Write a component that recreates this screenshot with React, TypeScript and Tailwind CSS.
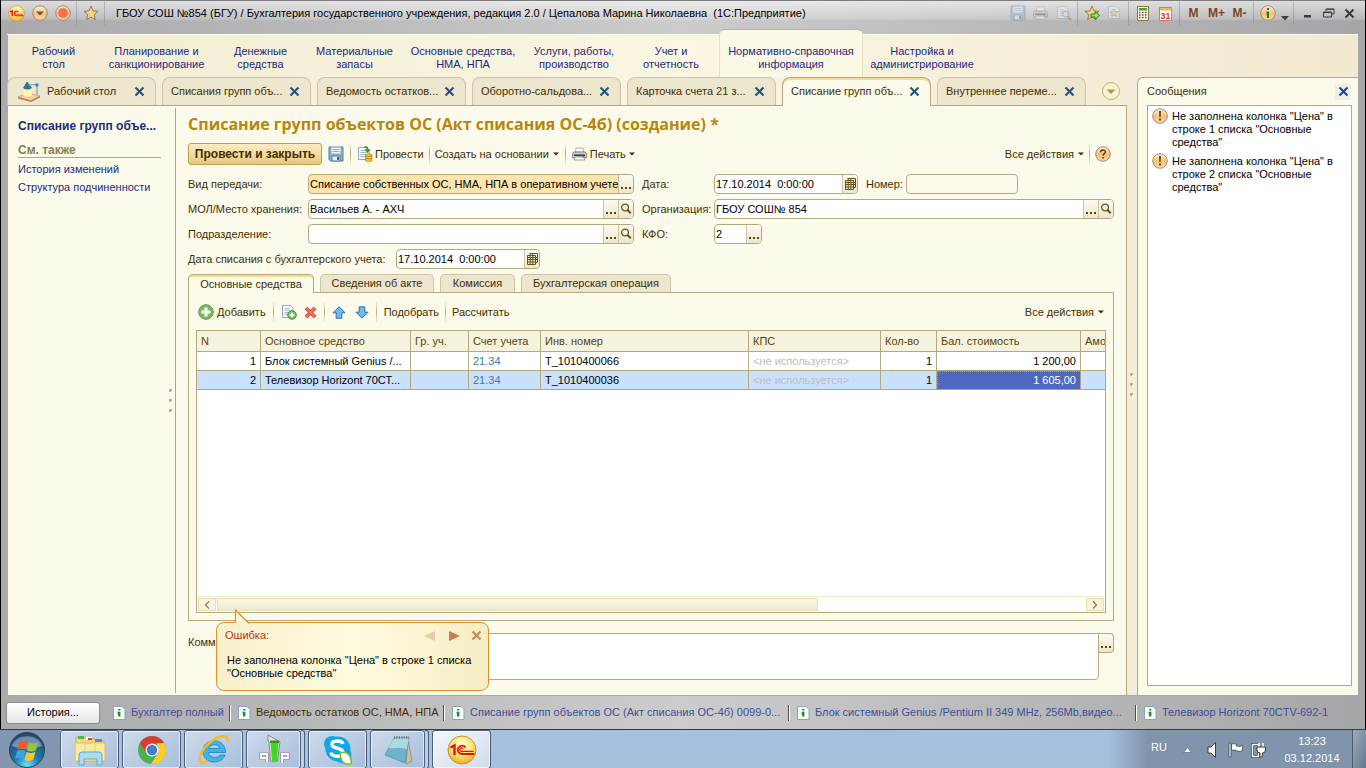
import type { ReactNode } from 'react';
import { clsx } from 'clsx';

const sections = [
  { lines: ['Рабочий', 'стол'], width: 'w-[93px]' },
  { lines: ['Планирование и', 'санкционирование'], width: 'w-[113px]' },
  { lines: ['Денежные', 'средства'], width: 'w-[95px]' },
  { lines: ['Материальные', 'запасы'], width: 'w-[93px]' },
  { lines: ['Основные средства,', 'НМА, НПА'], width: 'w-[124px]' },
  { lines: ['Услуги, работы,', 'производство'], width: 'w-[98px]' },
  { lines: ['Учет и', 'отчетность'], width: 'w-[96px]' },
  { lines: ['Нормативно-справочная', 'информация'], width: 'w-[144px]', active: true },
  { lines: ['Настройка и', 'администрирование'], width: 'w-[118px]' },
];

const tabs = [
  { title: 'Рабочий стол', desktop: true },
  { title: 'Списания групп объ...' },
  { title: 'Ведомость остатков...' },
  { title: 'Оборотно-сальдова...' },
  { title: 'Карточка счета 21 з...' },
  { title: 'Списание групп объ...', active: true },
  { title: 'Внутреннее переме...' },
];

const rows = [
  { n: 1, name: 'Блок системный Genius /...', account: '21.34', inv: 'Т_1010400066', qty: 1, cost: '1 200,00' },
  { n: 2, name: 'Телевизор Horizont 70СТ...', account: '21.34', inv: 'Т_1010400036', qty: 1, cost: '1 605,00', selected: true },
];

const history = [
  { title: 'Бухгалтер полный', width: 'w-[116px]' },
  { title: 'Ведомость остатков ОС, НМА, НПА', width: 'w-[214px]', current: true },
  { title: 'Списание групп объектов ОС (Акт списания ОС-4б) 0099-0...', width: 'w-[345px]' },
  { title: 'Блок системный Genius /Pentium II 349 MHz, 256Mb,видео...', width: 'w-[347px]' },
  { title: 'Телевизор Horizont 70CTV-692-1', width: 'w-[200px]' },
];

/* ---------- icons ---------- */

function CloseIcon({ color = '#1f5378' }: { color?: string }) {
  return (
    <svg width="11" height="11" viewBox="0 0 11 11" fill="none">
      <path d="M1.500 1.500l8 8M9.500 1.500l-8 8" stroke={color} strokeWidth="2.100" />
    </svg>
  );
}

function OneCIcon({ size }: { size: number }) {
  return (
    <svg width={size} height={size} viewBox="0 0 30 30" fill="none">
      <defs>
        <radialGradient id="gold" cx="50%" cy="30%" r="75%">
          <stop offset="0" stopColor="#fffbd0" />
          <stop offset=".55" stopColor="#fbe16a" />
          <stop offset="1" stopColor="#e9a51c" />
        </radialGradient>
      </defs>
      <circle cx="15" cy="15" r="14" fill="url(#gold)" stroke="#c98d2c" />
      <path d="M3.500 12.500l4-2v9.500" stroke="#e0140c" strokeWidth="2.400" />
      <path d="M18.500 12.500a4.200 4.200 0 1 0-4 6.500h13" stroke="#e0140c" strokeWidth="1.800" />
      <path d="M16.300 13.800a1.800 1.800 0 1 0-1.800 2.600h12" stroke="#e0140c" strokeWidth="1.200" />
    </svg>
  );
}

function OrangeBall({ children }: { children?: ReactNode }) {
  return (
    <svg width="16" height="16" viewBox="0 0 16 16" fill="none">
      <defs>
        <linearGradient id="ball" x1="0" y1="0" x2="0" y2="1">
          <stop offset="0" stopColor="#fdeed9" />
          <stop offset=".55" stopColor="#f8bf76" />
          <stop offset="1" stopColor="#fbdcae" />
        </linearGradient>
      </defs>
      <circle cx="8" cy="8" r="7.300" fill="url(#ball)" stroke="#a58c78" />
      {children}
    </svg>
  );
}

function StarIcon({ arrow }: { arrow?: boolean }) {
  return (
    <svg width="16" height="16" viewBox="0 0 16 16">
      <path d="M8 1l2 4.900 5 .4-3.800 3.300 1.200 5L8 12l-4.400 2.600 1.200-5L1 6.300l5-.4z" fill="#fbd27e" stroke="#9a7a50" />
      {arrow && <path d="M7 9h4V6.500l4.500 4-4.500 4V12H7z" fill="#9ade5e" stroke="#2f7d1c" />}
    </svg>
  );
}

function FloppyIcon() {
  return (
    <svg width="16" height="16" viewBox="0 0 16 16">
      <path d="M1 1h14v14H2.500L1 13.500z" fill="#8fb0cb" stroke="#557e9e" />
      <path d="M3.500 1.500h9v6h-9z" fill="#eef5fa" />
      <path d="M4.500 3.500h7M4.500 5.500h7" stroke="#8fa9bd" />
      <path d="M4 10h8v5H4z" fill="#e9eef2" stroke="#557e9e" />
      <path d="M9 11h2v3H9z" fill="#41637f" />
    </svg>
  );
}

function PrinterIcon() {
  return (
    <svg width="15" height="14" viewBox="0 0 15 14">
      <path d="M4 1h7l.5 4h-8z" fill="#fff" stroke="#9a9a9a" strokeWidth=".8" />
      <path d="M1.500 5h12l1 2v4H.5V7z" fill="#c9c9c9" stroke="#7c7c7c" strokeWidth=".8" />
      <path d="M2 7.500h11v1.500H2z" fill="#3b3b3b" />
      <path d="M3 10h9l.8 3H2.200z" fill="#fff" stroke="#8c8c8c" strokeWidth=".8" />
      <path d="M10.500 10h2" stroke="#d24b2c" strokeWidth="1.500" />
    </svg>
  );
}

function PageIcon({ children }: { children?: ReactNode }) {
  return (
    <svg width="16" height="16" viewBox="0 0 16 16">
      <path d="M1.500 1.500h8l2.500 2.500v9.500H1.500z" fill="#f7fafc" stroke="#94a9b8" />
      <path d="M3.500 4.500h5M3.500 6.500h6M3.500 8.500h6M3.500 10.500h5" stroke="#a7bac8" />
      {children}
    </svg>
  );
}

function CoinsPostIcon() {
  return (
    <PageIcon>
      <path d="M7.500 0c3 0 4 1 4 3.500h2.500L10.500 7 7 3.500h2.300C9.300 2 8.500 1.500 7.500 1.500z" fill="#3d9b35" />
      <path d="M8.500 9c0-1.600 6.500-1.600 6.500 0v5.500c0 1.500-6.500 1.500-6.500 0z" fill="#f3c02f" stroke="#b98410" strokeWidth=".7" />
      <path d="M8.500 9.500c1 1.300 5.500 1.300 6.500 0M8.500 12c1 1.300 5.500 1.300 6.500 0" fill="none" stroke="#b98410" strokeWidth=".8" />
    </PageIcon>
  );
}

function SearchIcon() {
  return (
    <svg width="12" height="12" viewBox="0 0 12 12" fill="none">
      <circle cx="5" cy="4.500" r="3.400" stroke="#6a5312" strokeWidth="1.300" />
      <path d="M7.500 7l3.200 3.300" stroke="#6a5312" strokeWidth="2" />
    </svg>
  );
}

function CalendarGridIcon() {
  return (
    <svg width="11" height="12" viewBox="0 0 11 12" fill="none">
      <path d="M2.500.5h8v9h-2M.5 2.500h8v9h-8zM.5 4.500h10M.5 6.500h10M.5 9h8M3.200.5v11M5.800.5v11" stroke="#6a5312" />
    </svg>
  );
}

function DropArrow() {
  return (
    <svg width="6" height="4" viewBox="0 0 6 4" className="shrink-0">
      <path d="M0 .5h6l-3 3z" fill="#3f2f00" />
    </svg>
  );
}

function InfoPageIcon() {
  return (
    <svg width="13" height="14" viewBox="0 0 13 14" className="shrink-0">
      <path d="M.5.5h8.500l3 3v10H.5z" fill="#f6fbff" stroke="#89a4b4" />
      <path d="M5.200 3h2.200v1.600H5.200zM4.500 5.800h2.900v4.700h-2.200z" fill="#2b8a18" />
    </svg>
  );
}

function LampIcon() {
  return (
    <svg width="25" height="22" viewBox="0 0 25 22" fill="none">
      <path d="M1 16l10-4 12 3-9 5z" fill="#f0cfa2" stroke="#b58a5e" strokeWidth=".6" />
      <path d="M1 16l13 3.500 9-4.500v1.500l-9 4.500-13-3.500z" fill="#b97c4b" />
      <path d="M9 7l-3 7c3 2.500 8 2 9 0l-1-7z" fill="#fff6ae" />
      <path d="M10 1l4.500 6c-2 1.600-6 1.400-8 0z" fill="#2a7ea6" stroke="#14506f" strokeWidth=".6" />
      <path d="M12 4l8-.5V14" stroke="#7fa4b5" strokeWidth="1.200" />
      <circle cx="20" cy="4" r="1.700" fill="#2f8bb4" />
    </svg>
  );
}

function MoveArrow({ down }: { down?: boolean }) {
  return (
    <svg width="14" height="13" viewBox="0 0 14 13" className={down ? 'rotate-180' : undefined}>
      <path d="M7 .8l6 6H9.800v5.400H4.200V6.800H1z" fill="#6fb9ee" stroke="#336f9f" />
    </svg>
  );
}

/* ---------- small parts ---------- */

const pickClass =
  'flex w-[15px] shrink-0 items-center justify-center self-stretch border-l border-[#cdc5a2] bg-linear-to-b from-[#fdfbf0] to-[#ece6cd] text-[#5a4408]';

function DotsIcon() {
  return (
    <svg width="11" height="12" viewBox="0 0 11 12">
      <path d="M0 9h2v2H0zM4 9h2v2H4zM8 9h2v2H8z" fill="#5a4408" />
    </svg>
  );
}

function EllipsisButton() {
  return (
    <button type="button" aria-label="Выбрать" className={pickClass}>
      <DotsIcon />
    </button>
  );
}

function SearchButton() {
  return (
    <button type="button" aria-label="Открыть" className={pickClass}>
      <SearchIcon />
    </button>
  );
}

function DateButton() {
  return (
    <button type="button" aria-label="Календарь" className={pickClass}>
      <CalendarGridIcon />
    </button>
  );
}

interface FieldProps {
  id: string;
  value?: string;
  width: string;
  tone?: string;
  readOnly?: boolean;
  children?: ReactNode;
}

function Field({ id, value = '', width, tone = 'bg-white', readOnly, children }: FieldProps) {
  return (
    <div className={clsx('flex h-5 items-center overflow-hidden rounded border border-[#b3a97f]', width, tone)}>
      <input id={id} defaultValue={value} readOnly={readOnly} className="min-w-0 flex-1 pl-px whitespace-pre text-black outline-none" />
      {children}
    </div>
  );
}

function Divider() {
  return <span className="h-5 w-px shrink-0 bg-linear-to-b from-[#f5efd8] via-[#b3a97f] to-[#f5efd8]" />;
}

function BarDivider() {
  return <span className="mx-[2px] h-6 w-px shrink-0 bg-linear-to-b from-[#b9b9bb] to-[#98989b]" />;
}

function BarButton({ label, faded, children }: { label: string; faded?: boolean; children: ReactNode }) {
  return (
    <button
      type="button"
      aria-label={label}
      className={clsx('flex h-6 w-[23px] shrink-0 items-center justify-center', faded && 'opacity-40')}
    >
      {children}
    </button>
  );
}

function TitleBar() {
  return (
    <header className="flex h-[34px] items-start border-t border-[#7d7d80] bg-linear-to-b from-white/60 from-0% via-white/20 via-55% to-transparent to-60% pl-1 pr-[5px]">
      <div className="flex h-6 items-center">
        <BarButton label="Главное меню"><OneCIcon size={17} /></BarButton>
        <BarButton label="Меню">
          <OrangeBall><path d="M4 6.500h8l-4 4z" fill="#6d5a48" /></OrangeBall>
        </BarButton>
        <BarButton label="Остановить">
          <OrangeBall><circle cx="8" cy="8" r="5" fill="#f8704a" stroke="#f4a070" /></OrangeBall>
        </BarButton>
        <BarDivider />
        <BarButton label="Избранное"><StarIcon /></BarButton>
        <BarDivider />
      </div>
      <h1 className="flex h-6 min-w-0 flex-1 items-center overflow-hidden pl-[9px] whitespace-pre text-black">
        ГБОУ СОШ №854 (БГУ) / Бухгалтерия государственного учреждения, редакция 2.0 / Цепалова Марина Николаевна  (1С:Предприятие)
      </h1>
      <div className="flex h-6 items-center">
        <BarButton label="Сохранить" faded><FloppyIcon /></BarButton>
        <BarButton label="Печать" faded><PrinterIcon /></BarButton>
        <BarButton label="Просмотр" faded>
          <PageIcon><circle cx="9.500" cy="9" r="3" fill="#d9ecf8" stroke="#557e9e" /><path d="M12 11.500l3 3.500" stroke="#a06a3c" strokeWidth="2" /></PageIcon>
        </BarButton>
        <BarDivider />
        <BarButton label="Добавить в избранное"><StarIcon arrow /></BarButton>
        <BarButton label="Ссылка" faded>
          <PageIcon><path d="M7 4l1 2.500 3 .2-2.300 2 .8 3L7 10l-2.500 1.700.8-3L3 6.700l3-.2z" fill="#fbd27e" stroke="#9a7a50" strokeWidth=".7" /></PageIcon>
        </BarButton>
        <BarDivider />
        <BarButton label="Калькулятор">
          <svg width="12" height="15" viewBox="0 0 12 15">
            <path d="M.5.5h11v14H.5z" fill="#fdf7e4" stroke="#8c7348" />
            <path d="M2 2h8v2.500H2z" fill="#4e9f42" />
            <path d="M2 6.500h8M2 9h8M2 11.500h8" stroke="#6d4a33" strokeWidth="1.500" strokeDasharray="1.500 1.500" />
          </svg>
        </BarButton>
        <BarButton label="Календарь">
          <svg width="13" height="15" viewBox="0 0 13 15">
            <path d="M.5 1.500h12v13H.5z" fill="#fffdf6" stroke="#c08a4c" />
            <path d="M1 2h11v2.500H1z" fill="#f0b260" />
            <text x="6.500" y="13" textAnchor="middle" fontSize="9" fontWeight="bold" fill="#d83a20">31</text>
          </svg>
        </BarButton>
        <BarDivider />
        {['M', 'M+', 'M-'].map((m) => (
          <BarButton key={m} label={m}>
            <span className="text-[12px] font-bold text-[#7d4622]">{m}</span>
          </BarButton>
        ))}
        <BarDivider />
        <BarButton label="Справка">
          <OrangeBall><path d="M7 3h2v2H7zM6.500 6.500H9V13H7z" fill="#2d7420" /></OrangeBall>
        </BarButton>
        <button type="button" aria-label="Ещё" className="flex h-6 w-3 items-end justify-center pb-1">
          <svg width="8" height="5" viewBox="0 0 8 5"><path d="M0 0h8L4 4.500z" fill="#3c3c3c" /></svg>
        </button>
        <BarDivider />
        <BarButton label="Свернуть">
          <svg width="8" height="10" viewBox="0 0 8 10"><path d="M0 7h7v2.500H0z" fill="#3c3c3c" /></svg>
        </BarButton>
        <button type="button" aria-label="Восстановить" className="flex h-6 w-5 items-center justify-center">
          <svg width="12" height="10" viewBox="0 0 12 10" fill="none" stroke="#3c3c3c">
            <path d="M3 3V1h8v5H9M.5 4h8v5h-8zM.5 4.500h8M3 1.300h8" />
          </svg>
        </button>
        <button type="button" aria-label="Закрыть" className="flex h-6 w-[21px] items-center justify-center">
          <CloseIcon color="#3c3c3c" />
        </button>
      </div>
    </header>
  );
}

function SectionMenu() {
  return (
    <nav className="-ml-px flex h-[43px] items-stretch border-t border-[#fffdf2]">
      {sections.map((s) => (
        <a
          key={s.lines[0]}
          href="#"
          className={clsx(
            'shrink-0 text-center whitespace-nowrap text-[#1c2a80]',
            s.width,
            s.active
              ? '-mt-[6px] rounded-t-md border-x border-t border-x-[#e6dfc4] border-t-[#b9b59f] bg-[#fbf8e5] pt-[15px]'
              : 'pt-[10px]',
          )}
        >
          {s.lines[0]}
          <br />
          {s.lines[1]}
        </a>
      ))}
    </nav>
  );
}

function TabStrip() {
  return (
    <div className="-ml-px flex h-7 items-stretch gap-[6px]">
      {tabs.map((t) => (
        <div
          key={t.title}
          className={clsx(
            'flex min-w-0 items-center rounded-t-lg border-x border-t pr-[10px]',
            t.active
              ? 'relative -mb-px border-[#b3a97f] bg-[#fcfaeb] pb-px shadow-[inset_0_2px_0_#fbd98f]'
              : 'border-[#cdc5a6] bg-[#ece6cf]',
            t.desktop ? 'w-[149px] pl-[9px]' : 'w-[149px] pl-2',
          )}
        >
          {t.desktop && <LampIcon />}
          <a href="#" className={clsx('flex-1 whitespace-nowrap', t.desktop && 'pl-[5px]')}>{t.title}</a>
          <button type="button" aria-label="Закрыть вкладку"><CloseIcon /></button>
        </div>
      ))}
      <button type="button" aria-label="Все вкладки" className="ml-[9px] self-center">
        <svg width="20" height="20" viewBox="0 0 20 20">
          <circle cx="10" cy="10" r="8.500" fill="#f8f2d4" stroke="#bdb180" />
          <path d="M5.500 8.500h9L10 13z" fill="#a89a52" />
        </svg>
      </button>
    </div>
  );
}

function Sidebar() {
  return (
    <aside className="mt-[2px] mb-[2px] w-[168px] shrink-0 border-r border-[#b3a97f] pl-[10px] pr-[14px] pt-[10px] text-[#1c2a80]">
      <p className="py-[2px] text-[12px] font-bold whitespace-nowrap">Списание групп объе...</p>
      <h2 className="mt-[9px] border-b border-[#b3a97f] text-[12px] font-bold text-[#8b8050]">См. также</h2>
      <a href="#" className="mt-[5px] block">История изменений</a>
      <a href="#" className="mt-[5px] block">Структура подчиненности</a>
    </aside>
  );
}

function CommandBar() {
  return (
    <div className="mt-[7px] flex h-[22px] items-center whitespace-nowrap">
      <button
        type="button"
        className="h-[22px] w-[134px] rounded-[3px] border border-[#c2a04c] bg-linear-to-b from-[#fbecc4] via-[#f3dba2] to-[#e6c67c] text-[12px] font-bold"
      >
        Провести и закрыть
      </button>
      <button type="button" aria-label="Записать" className="ml-[6px]"><FloppyIcon /></button>
      <span className="mx-[6px] flex"><Divider /></span>
      <button type="button" className="flex items-center gap-[2px]"><CoinsPostIcon />Провести</button>
      <span className="mx-[5px] flex"><Divider /></span>
      <button type="button" className="flex items-center gap-1">Создать на основании<DropArrow /></button>
      <span className="mx-[6px] flex"><Divider /></span>
      <button type="button" className="flex items-center gap-[3px]"><PrinterIcon />Печать<DropArrow /></button>
      <button type="button" className="ml-auto flex items-center gap-1">Все действия<DropArrow /></button>
      <span className="mx-[5px] flex"><Divider /></span>
      <button type="button" aria-label="Справка" className="mr-[3px]">
        <OrangeBall>
          <path d="M5.700 6.200C5.700 3.200 10.400 3.300 10.300 6c0 1.500-2.200 1.700-2.200 3.600M7.300 11.800h1.700" fill="none" stroke="#5c3a14" strokeWidth="1.500" />
        </OrangeBall>
      </button>
    </div>
  );
}

function DocumentFields() {
  return (
    <div className="mt-[9px] grid gap-[5px] whitespace-nowrap">
      <div className="flex items-center">
        <label htmlFor="kind" className="w-[120px]">Вид передачи:</label>
        <Field id="kind" value="Списание собственных ОС, НМА, НПА в оперативном учете" width="w-[326px]" tone="bg-[#ffe4ad]">
          <EllipsisButton />
        </Field>
        <label htmlFor="date" className="ml-2 w-[72px]">Дата:</label>
        <Field id="date" value="17.10.2014  0:00:00" width="w-[144px]"><DateButton /></Field>
        <label htmlFor="number" className="ml-2 w-10">Номер:</label>
        <Field id="number" readOnly width="w-[112px]" tone="bg-[#fcfaeb]" />
      </div>
      <div className="flex items-center">
        <label htmlFor="place" className="w-[120px]">МОЛ/Место хранения:</label>
        <Field id="place" value="Васильев А. - АХЧ" width="w-[326px]"><EllipsisButton /><SearchButton /></Field>
        <label htmlFor="org" className="ml-2 w-[72px]">Организация:</label>
        <Field id="org" value="ГБОУ СОШ№ 854" width="flex-1"><EllipsisButton /><SearchButton /></Field>
      </div>
      <div className="flex items-center">
        <label htmlFor="unit" className="w-[120px]">Подразделение:</label>
        <Field id="unit" width="w-[326px]"><EllipsisButton /><SearchButton /></Field>
        <label htmlFor="kfo" className="ml-2 w-[72px]">КФО:</label>
        <Field id="kfo" value="2" width="w-12"><EllipsisButton /></Field>
      </div>
      <div className="flex items-center">
        <label htmlFor="writeoff" className="w-[208px]">Дата списания с бухгалтерского учета:</label>
        <Field id="writeoff" value="17.10.2014  0:00:00" width="w-[144px]"><DateButton /></Field>
      </div>
    </div>
  );
}

const pages = [
  { title: 'Основные средства', width: 'w-[126px]', active: true },
  { title: 'Сведения об акте', width: 'w-[114px]' },
  { title: 'Комиссия', width: 'w-[75px]' },
  { title: 'Бухгалтерская операция', width: 'w-[150px]' },
];

function TableCommands() {
  return (
    <div className="flex h-5 items-center pr-[2px] pl-[2px] whitespace-nowrap">
      <button type="button" className="flex items-center gap-[3px]">
        <svg width="16" height="16" viewBox="0 0 16 16">
          <circle cx="8" cy="8" r="7.300" fill="#77bb5c" stroke="#6c8a62" />
          <path d="M6.500 3.500h3v3h3v3h-3v3h-3v-3h-3v-3h3z" fill="#fff" />
        </svg>
        Добавить
      </button>
      <span className="mx-[7px] flex"><Divider /></span>
      <button type="button" aria-label="Скопировать">
        <PageIcon>
          <circle cx="11" cy="11" r="4.300" fill="#77bb5c" stroke="#5f8a52" />
          <path d="M11 8.500v5M8.500 11h5" stroke="#fff" strokeWidth="1.600" />
        </PageIcon>
      </button>
      <button type="button" aria-label="Удалить" className="ml-[7px]">
        <svg width="13" height="13" viewBox="0 0 13 13">
          <path d="M2 2l9 9M11 2l-9 9" stroke="#c8382c" strokeWidth="3.600" />
          <path d="M2 2l9 9M11 2l-9 9" stroke="#f27562" strokeWidth="2" />
        </svg>
      </button>
      <span className="mx-[7px] flex"><Divider /></span>
      <button type="button" aria-label="Переместить вверх"><MoveArrow /></button>
      <button type="button" aria-label="Переместить вниз" className="ml-[9px]"><MoveArrow down /></button>
      <span className="mx-[7px] flex"><Divider /></span>
      <button type="button">Подобрать</button>
      <span className="mx-[6px] flex"><Divider /></span>
      <button type="button">Рассчитать</button>
      <button type="button" className="ml-auto flex items-center gap-1">Все действия<DropArrow /></button>
    </div>
  );
}

const headClass = 'h-[21px] overflow-hidden border-r border-b border-[#b3a97f] px-1 text-left font-normal text-[#5a4408]';
const cellClass = 'h-[19px] overflow-hidden border-r border-b border-[#b3a97f] px-1';

function AssetsTable() {
  return (
    <div className="mt-2 flex min-h-[283px] flex-1 flex-col overflow-hidden border border-[#b3a97f] bg-white">
      <table className="w-full table-fixed border-separate border-spacing-0 whitespace-nowrap text-black">
        <colgroup>
          <col className="w-16" />
          <col className="w-[150px]" />
          <col className="w-[58px]" />
          <col className="w-[72px]" />
          <col className="w-[208px]" />
          <col className="w-[132px]" />
          <col className="w-14" />
          <col className="w-36" />
          <col />
        </colgroup>
        <thead className="bg-[#f5f2dd]">
          <tr>
            {['N', 'Основное средство', 'Гр. уч.', 'Счет учета', 'Инв. номер', 'КПС', 'Кол-во', 'Бал. стоимость'].map((h) => (
              <th key={h} className={headClass}>{h}</th>
            ))}
            <th className={clsx(headClass, 'border-r-0')}>Амо</th>
          </tr>
        </thead>
        <tbody>
          {rows.map((r) => (
            <tr key={r.n} className={r.selected ? 'bg-[#c9e1ff]' : undefined}>
              <td className={clsx(cellClass, 'text-right')}>{r.n}</td>
              <td className={cellClass}>{r.name}</td>
              <td className={cellClass} />
              <td className={clsx(cellClass, 'text-[#3a78b8]')}>{r.account}</td>
              <td className={cellClass}>{r.inv}</td>
              <td className={clsx(cellClass, 'text-[#bdbdbd]')}>&lt;не используется&gt;</td>
              <td className={clsx(cellClass, 'text-right')}>{r.qty}</td>
              <td
                className={clsx(
                  cellClass,
                  'text-right',
                  r.selected && 'bg-[#4f69c0] text-white outline-1 -outline-offset-1 outline-dotted outline-[#b5a04c]',
                )}
              >
                {r.cost}
              </td>
              <td className={clsx(cellClass, 'border-r-0')} />
            </tr>
          ))}
        </tbody>
      </table>
      <div className="mt-auto flex h-4 items-stretch border-t border-[#efe9cb] bg-[#fffefa] p-px">
        <button type="button" aria-label="Влево" className="flex w-[18px] items-center justify-center border border-[#e6dfb5] bg-[#f7f3dc]">
          <svg width="6" height="8" viewBox="0 0 6 8" fill="none"><path d="M5 .5L1.500 4 5 7.500" stroke="#8b7f55" strokeWidth="1.300" /></svg>
        </button>
        <div className="ml-px w-[601px] border border-[#e6dfb5] bg-linear-to-b from-[#faf7e4] to-[#efead0]" />
        <button type="button" aria-label="Вправо" className="ml-auto flex w-[18px] items-center justify-center border border-[#e6dfb5] bg-[#f7f3dc]">
          <svg width="6" height="8" viewBox="0 0 6 8" fill="none"><path d="M1 .5L4.500 4 1 7.500" stroke="#8b7f55" strokeWidth="1.300" /></svg>
        </button>
      </div>
    </div>
  );
}

function ErrorBalloon() {
  return (
    <div
      role="alert"
      className="absolute -top-[11px] left-7 h-[69px] w-[273px] rounded-lg border border-[#dd9222] bg-linear-to-r from-[#f8f0cb] via-[#fffbe0] to-[#f6edc4] pt-[6px] pr-[5px] pl-2 text-black"
    >
      <svg width="18" height="16" viewBox="0 0 18 16" className="absolute -top-[15px] left-[17px]">
        <path d="M1.500 16V2L15 15.500V16z" fill="#fbf4d3" />
        <path d="M1.500 15V2L15 15.500" fill="none" stroke="#dd9222" strokeWidth="1.200" />
      </svg>
      <div className="flex items-center">
        <span className="flex-1 text-[#c03410]">Ошибка:</span>
        <button type="button" aria-label="Назад">
          <svg width="12" height="12" viewBox="0 0 12 12"><path d="M11 1v10L0 6z" fill="#ecc8a4" /></svg>
        </button>
        <button type="button" aria-label="Далее" className="ml-3">
          <svg width="12" height="12" viewBox="0 0 12 12"><path d="M1 1v10l11-5z" fill="#cf7c4c" /></svg>
        </button>
        <button type="button" aria-label="Закрыть" className="mr-px ml-[11px]"><CloseIcon color="#c98458" /></button>
      </div>
      <p className="mt-3 ml-[2px] whitespace-nowrap">
        Не заполнена колонка "Цена" в строке 1 списка
        <br />
        "Основные средства"
      </p>
    </div>
  );
}

function DocumentForm() {
  return (
    <section className="flex min-w-0 flex-1 flex-col px-3 pt-[7px] pb-[15px]">
      <h2 className="h-[23px] font-['Open_Sans','Noto_Sans',sans-serif] text-[16px] leading-[23px] font-bold whitespace-nowrap text-[#b8860b]">
        Списание групп объектов ОС (Акт списания ОС-4б) (создание) *
      </h2>
      <CommandBar />
      <DocumentFields />
      <div className="mt-[5px] flex h-[18px] gap-[6px]">
        {pages.map((p) => (
          <button
            key={p.title}
            type="button"
            className={clsx(
              'rounded-t-[5px] border-x border-t whitespace-nowrap',
              p.width,
              p.active
                ? 'relative -mb-px border-[#b3a97f] bg-[#fcfaeb] shadow-[inset_0_2px_0_#fbd98f]'
                : 'border-[#cdc5a6] bg-[#ece6cf]',
            )}
          >
            {p.title}
          </button>
        ))}
      </div>
      <div className="flex flex-1 flex-col border border-[#b3a97f] px-[7px] pt-[9px] pb-[7px]">
        <TableCommands />
        <AssetsTable />
      </div>
      <div className="relative mt-3 flex items-start">
        <label htmlFor="comment" className="w-[120px] pt-[3px]">Комм</label>
        <textarea
          id="comment"
          className="h-[47px] flex-1 resize-none rounded rounded-tr-none border border-[#b3a97f] bg-white px-1 text-black outline-none"
        />
        <button
          type="button"
          aria-label="Открыть комментарий"
          className="flex h-5 w-[15px] items-center justify-center rounded-r border border-l-0 border-[#b3a97f] bg-linear-to-b from-[#fdfbf0] to-[#ece6cd]"
        >
          <DotsIcon />
        </button>
        <ErrorBalloon />
      </div>
    </section>
  );
}

function Grip() {
  return (
    <svg width="6" height="28" viewBox="0 0 6 28">
      <path d="M1 1h3v3H1zM1 11h3v3H1zM1 21h3v3H1z" fill="#b9b08a" />
      <path d="M3 3h2v2H3zM3 13h2v2H3zM3 23h2v2H3z" fill="#fffdf0" />
    </svg>
  );
}

function Messages() {
  return (
    <aside className="flex w-[221px] shrink-0 flex-col rounded-tl-md border-t border-l border-[#b3a97f] bg-[#fcfaeb] pr-[6px] pb-[9px] pl-[9px]">
      <div className="flex h-[27px] items-center justify-between pr-px">
        <h2>Сообщения</h2>
        <button type="button" aria-label="Закрыть сообщения" className="flex size-4 items-center justify-center bg-[#f1efe2]">
          <CloseIcon color="#1543b0" />
        </button>
      </div>
      <ul className="flex-1 space-y-[6px] border border-[#b3a97f] bg-white pt-1 pl-1 text-black">
        {[1, 2].map((n) => (
          <li key={n} className="flex items-start gap-1">
            <span className="-mt-[2px] shrink-0">
              <OrangeBall><path d="M7 3h2l-.4 6H7.400zM7.100 10.500h1.800v2H7.100z" fill="#5c3a14" /></OrangeBall>
            </span>
            <span>
              Не заполнена колонка "Цена" в
              <br />
              строке {n} списка "Основные
              <br />
              средства"
            </span>
          </li>
        ))}
      </ul>
    </aside>
  );
}

function HistoryBar() {
  return (
    <footer className="flex h-[33px] items-center overflow-hidden pr-2">
      <button
        type="button"
        className="mr-[13px] ml-[5px] h-[22px] w-[94px] shrink-0 rounded-[3px] border border-[#8d8d8d] bg-linear-to-b from-white to-[#e6e6e6] text-black"
      >
        История...
      </button>
      {history.map((h, i) => (
        <div key={h.title} className={clsx('flex h-[14px] shrink-0 items-center', h.width)}>
          {i > 0 && <span className="mr-[7px] h-4 w-[2px] shrink-0 border-l border-[#4d4d4d] bg-white" />}
          <InfoPageIcon />
          <a href="#" className={clsx('ml-[5px] whitespace-nowrap', h.current ? 'text-[#3f2f00]' : 'text-[#3d4f9a]')}>
            {h.title}
          </a>
        </div>
      ))}
    </footer>
  );
}

/* ---------- Windows taskbar ---------- */

function StartOrb() {
  return (
    <svg width="38" height="38" viewBox="0 0 38 38">
      <defs>
        <radialGradient id="orb" cx="50%" cy="92%" r="85%">
          <stop offset="0" stopColor="#6fe0f8" />
          <stop offset=".4" stopColor="#1f7cb0" />
          <stop offset="1" stopColor="#23486c" />
        </radialGradient>
      </defs>
      <circle cx="19" cy="19" r="17.500" fill="url(#orb)" stroke="#24435f" />
      <path d="M4 15C7 2 31 2 34 15c-9 4-21 4-30 0z" fill="#fff" opacity=".35" />
      <path d="M11 11c3-2 6-2 9 0l-2 8c-3-2-5-2-8.500-.5z" fill="#ee5c2a" />
      <path d="M21 11.500c3 1.500 6 1.500 9-.5l-2 8c-3 2-6 2-9 .5z" fill="#93c83d" />
      <path d="M9 20c3-1.500 5.500-1.500 8.500.3l-2 8c-3-2-5.500-2-8.500-.3z" fill="#3fa0e6" />
      <path d="M18.500 21c3 1.500 6 1.500 9-.5l-2 7.500c-3 2.500-6 2.500-9 .8z" fill="#fcc527" />
    </svg>
  );
}

function ExplorerIcon() {
  return (
    <svg width="34" height="32" viewBox="0 0 34 32">
      <path d="M3 3h9l2 2h8l2 2h7v20H3z" fill="#f2d77c" stroke="#c9a344" strokeWidth=".8" />
      <path d="M5 2h6v3H5z" fill="#54b848" />
      <path d="M13 3h6v3h-6z" fill="#fff" />
      <path d="M15 4h4v2h-4z" fill="#d6452e" />
      <path d="M22 5h7v3h-7z" fill="#4a90d6" />
      <path d="M2 9h30v18H2z" fill="#fbeaa3" stroke="#d7b75a" strokeWidth=".8" />
      <path d="M12 9v18M22 9v18" stroke="#e7cd7a" />
      <path d="M6 31V21q0-3 3-3h17q3 0 3 3v10h-5v-6H11v6z" fill="#a8dcf5" stroke="#5fa9d0" />
    </svg>
  );
}

function ChromeIcon() {
  return (
    <svg width="30" height="30" viewBox="0 0 30 30">
      <circle cx="15" cy="15" r="14" fill="#4caf50" />
      <path d="M2.900 8A14 14 0 0 1 27.100 8L15 8.500 9 18z" fill="#dd3b2e" />
      <path d="M27.100 8A14 14 0 0 1 14 29l7-11-1-9.500z" fill="#fccd2d" />
      <circle cx="15" cy="15" r="6.500" fill="#fff" />
      <circle cx="15" cy="15" r="5.200" fill="#3f7fd0" />
    </svg>
  );
}

function ExplorerEIcon() {
  return (
    <svg width="32" height="32" viewBox="0 0 32 32" fill="none">
      <path d="M27.500 18.500H10.500c.5 5.500 9 6.500 11.500 2.500h5C24 31 5 31 5 17 5 3.500 27.500 2.500 27.500 18.500zM10.800 14.500h10.900c-.6-5-9.900-5.200-10.900 0z" fill="#42b4ec" stroke="#1f80be" strokeWidth=".8" />
      <path d="M29.500 8C31-.5 21 1.500 13 7.500 3 15-1 27 3.500 28.500c1.500.6 4-.5 6-2" stroke="#f3bd20" strokeWidth="2.400" />
    </svg>
  );
}

function QipIcon() {
  return (
    <svg width="34" height="32" viewBox="0 0 34 32" fill="none">
      <path d="M11 1v6l1 1 1.500 19q3.500 2 7 0L23 8z" fill="#e4e6e8" stroke="#888" />
      <path d="M13.500 9h8L20 27h-5z" fill="#3ddb1f" />
      <path d="M13 6.500h9V9h-9z" fill="#3b8f2b" />
      <path d="M10 28v-8H4v4h6M25 29v-9h6v4h-6" stroke="#8a8a8a" strokeWidth="3.200" />
      <path d="M10 28v-8H4v4h6M25 29v-9h6v4h-6" stroke="#fff" strokeWidth="1.800" />
    </svg>
  );
}

function SkypeIcon() {
  return (
    <svg width="32" height="32" viewBox="0 0 32 32" fill="none">
      <circle cx="10" cy="10" r="8" fill="#12a5e8" />
      <circle cx="21" cy="21" r="8.500" fill="#12a5e8" />
      <circle cx="16" cy="15" r="12.500" fill="#12a5e8" />
      <path d="M21 10c-1-4-11-4-11 .5 0 5 11 2.500 11 8 0 5-11 5-12 0" stroke="#fff" strokeWidth="3.400" />
      <path d="M18 19q6-2 9 2 3 4 2 9-6 1-9-3-2-3-2-8z" fill="#fff" stroke="#7fba23" strokeWidth="1.500" />
    </svg>
  );
}

function NotepadIcon() {
  return (
    <svg width="32" height="30" viewBox="0 0 32 30">
      <path d="M26 4l4 22-6 3z" fill="#cdbfa4" stroke="#8d8067" strokeWidth=".7" />
      <path d="M12 3h15l-4 25L3 20z" fill="#6bb5c9" stroke="#4b93a8" strokeWidth=".8" />
      <path d="M12 3h15l-2 11c-7-2-12 0-19-1z" fill="#c6e8ee" opacity=".7" />
      <path d="M12 2.500h15" stroke="#6a7378" strokeWidth="2.500" strokeDasharray="1.200 1.200" />
    </svg>
  );
}

const apps = [
  { name: 'Проводник', icon: <ExplorerIcon /> },
  { name: 'Chrome', icon: <ChromeIcon /> },
  { name: 'Internet Explorer', icon: <ExplorerEIcon /> },
  { name: 'QIP', icon: <QipIcon />, stacked: true },
  { name: 'Skype', icon: <SkypeIcon /> },
  { name: 'Блокнот', icon: <NotepadIcon />, stacked: true },
  { name: '1С:Предприятие', icon: <OneCIcon size={30} />, active: true },
];

function Taskbar() {
  return (
    <div className="flex h-10 shrink-0 items-stretch border-t border-[#2e3b4a] bg-[#a6c0dd] text-white">
      <div className="flex w-[60px] items-center bg-[#8396af] pl-2">
        <button type="button" aria-label="Пуск"><StartOrb /></button>
      </div>
      <div className="flex gap-[3px]">
        {apps.map((a) => (
          <div key={a.name} className="flex w-[59px]">
            <button
              type="button"
              aria-label={a.name}
              className={clsx(
                'flex flex-1 items-center justify-center rounded-[3px] border border-[#4b5f78] shadow-[inset_0_0_0_1px_rgba(255,255,255,0.6)]',
                a.active ? 'bg-linear-to-br from-[#f4f7fb] to-[#cfdcec]' : 'bg-linear-to-br from-[#cddaeb] to-[#a9bfdb]',
              )}
            >
              {a.icon}
            </button>
            {a.stacked && <span className="w-1 rounded-r-[3px] border-y border-r border-[#4b5f78] bg-[#bfd0e5]" />}
          </div>
        ))}
      </div>
      <div className="ml-auto flex items-center bg-linear-to-r from-[#a6c0dd] to-[#8094ac] to-15% pl-[42px]">
        <span className="mb-1">RU</span>
        <button type="button" aria-label="Скрытые значки" className="ml-4">
          <svg width="9" height="6" viewBox="0 0 9 6"><path d="M4.500.5l4 5h-8z" fill="#fff" stroke="#4a5a6e" strokeWidth=".6" /></svg>
        </button>
        <svg width="10" height="16" viewBox="0 0 10 16" className="ml-[15px]">
          <path d="M1 5h3l4.500-4.500v15L4 11H1z" fill="#fff" stroke="#34414f" />
        </svg>
        <svg width="16" height="16" viewBox="0 0 16 16" className="ml-[11px]">
          <path d="M1 1h2v14H1z" fill="#fff" stroke="#34414f" strokeWidth=".8" />
          <path d="M3.500 2q3-1 5 .5v1.500q3 1 6.500-.5l-1 5.500q-3 1.500-6-.5-2-1-4.500 0z" fill="#fff" stroke="#34414f" strokeWidth=".8" />
        </svg>
        <svg width="15" height="16" viewBox="0 0 15 16" className="ml-[7px]" fill="none">
          <path d="M1.500 2.500h6v12h-6z" stroke="#34414f" strokeWidth="3" />
          <path d="M1.500 2.500h6v12h-6z" stroke="#fff" strokeWidth="1.500" />
          <path d="M8 1v4M12 1v4" stroke="#fff" strokeWidth="1.500" />
          <path d="M6 5h8.500v3q0 3-3.200 3v4H9v-4q-3 0-3-3z" fill="#fff" stroke="#34414f" />
        </svg>
        <div className="ml-[18px] w-[56px] text-center leading-[17px]">
          <div>13:23</div>
          <div>03.12.2014</div>
        </div>
        <span className="ml-3 w-[14px] self-stretch border-l border-[#4c5b6d] bg-linear-to-br from-[#9cabbd] to-[#64788f]" />
      </div>
    </div>
  );
}

export default function App() {
  return (
    <div className="flex min-h-screen flex-col font-['Liberation_Sans',Arial,sans-serif] text-[11px] leading-[13px] text-[#3f2f00]">
      <div className="flex flex-1 flex-col border-x border-black bg-linear-to-r from-[#a9a9ac] via-[#cccccc] to-[#a6a6a8]">
        <TitleBar />
        <div className="mx-[7px] flex flex-1 flex-col border-b border-[#b3a97f] bg-linear-to-r from-[#f1ecd2] via-[#faf6e2] to-[#f1e9d0]">
          <SectionMenu />
          <div className="flex flex-1">
            <main className="flex min-w-0 flex-1 flex-col">
              <TabStrip />
              <div className="flex flex-1 border-t border-r border-[#b3a97f] bg-[#fcfaeb]">
                <div className="relative flex">
                  <Sidebar />
                  <span className="absolute top-[282px] right-[2px]"><Grip /></span>
                </div>
                <DocumentForm />
              </div>
            </main>
            <div className="flex w-[10px] shrink-0 items-center justify-center bg-[#f2ecd9]"><Grip /></div>
            <Messages />
          </div>
        </div>
        <HistoryBar />
      </div>
      <Taskbar />
    </div>
  );
}
